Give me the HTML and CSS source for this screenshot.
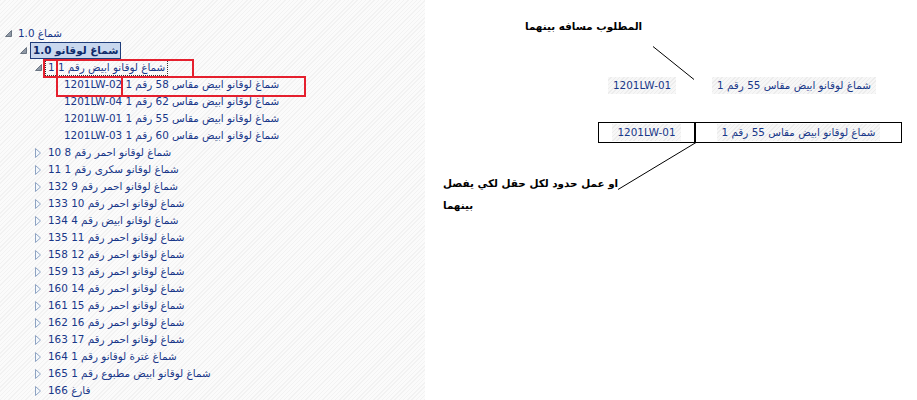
FILE: index.html
```html
<!DOCTYPE html>
<html lang="ar">
<head>
<meta charset="utf-8">
<title>tree</title>
<link rel="stylesheet" href="styles.css">
</head>
<body>
<div class="page">
  <div class="tree-panel">
    <ul class="tree" dir="ltr">
      <li class="node l0"><span class="tg"><svg width="7" height="7" viewBox="0 0 7 7"><polygon points="6.5,0.5 6.5,6.5 0.5,6.5" class="exp"/></svg></span><span class="lbl">1.0 شماغ</span></li>
      <li class="node l1"><span class="tg"><svg width="7" height="7" viewBox="0 0 7 7"><polygon points="6.5,0.5 6.5,6.5 0.5,6.5" class="exp"/></svg></span><span class="lbl sel">1.0 شماغ لوقانو</span></li>
      <li class="node l2"><span class="tg"><svg width="7" height="7" viewBox="0 0 7 7"><polygon points="6.5,0.5 6.5,6.5 0.5,6.5" class="exp"/></svg></span><span class="lbl focus">1 شماغ لوقانو ابيض رقم 1</span></li>
      <li class="node l3"><span class="tg"></span><span class="lbl">1201LW-02 شماغ لوقانو ابيض مقاس 58 رقم 1</span></li>
      <li class="node l3"><span class="tg"></span><span class="lbl">1201LW-04 شماغ لوقانو ابيض مقاس 62 رقم 1</span></li>
      <li class="node l3"><span class="tg"></span><span class="lbl">1201LW-01 شماغ لوقانو ابيض مقاس 55 رقم 1</span></li>
      <li class="node l3"><span class="tg"></span><span class="lbl">1201LW-03 شماغ لوقانو ابيض مقاس 60 رقم 1</span></li>
      <li class="node l2"><span class="tg"><svg width="7" height="10" viewBox="0 0 7 10"><polygon points="0.5,0.5 5.5,5 0.5,9.5" class="col"/></svg></span><span class="lbl">10 شماغ لوقانو احمر رقم 8</span></li>
      <li class="node l2"><span class="tg"><svg width="7" height="10" viewBox="0 0 7 10"><polygon points="0.5,0.5 5.5,5 0.5,9.5" class="col"/></svg></span><span class="lbl">11 شماغ لوقانو سكرى رقم 1</span></li>
      <li class="node l2"><span class="tg"><svg width="7" height="10" viewBox="0 0 7 10"><polygon points="0.5,0.5 5.5,5 0.5,9.5" class="col"/></svg></span><span class="lbl">132 شماغ لوقانو احمر رقم 9</span></li>
      <li class="node l2"><span class="tg"><svg width="7" height="10" viewBox="0 0 7 10"><polygon points="0.5,0.5 5.5,5 0.5,9.5" class="col"/></svg></span><span class="lbl">133 شماغ لوقانو احمر رقم 10</span></li>
      <li class="node l2"><span class="tg"><svg width="7" height="10" viewBox="0 0 7 10"><polygon points="0.5,0.5 5.5,5 0.5,9.5" class="col"/></svg></span><span class="lbl">134 شماغ لوقانو ابيض رقم 4</span></li>
      <li class="node l2"><span class="tg"><svg width="7" height="10" viewBox="0 0 7 10"><polygon points="0.5,0.5 5.5,5 0.5,9.5" class="col"/></svg></span><span class="lbl">135 شماغ لوقانو احمر رقم 11</span></li>
      <li class="node l2"><span class="tg"><svg width="7" height="10" viewBox="0 0 7 10"><polygon points="0.5,0.5 5.5,5 0.5,9.5" class="col"/></svg></span><span class="lbl">158 شماغ لوقانو احمر رقم 12</span></li>
      <li class="node l2"><span class="tg"><svg width="7" height="10" viewBox="0 0 7 10"><polygon points="0.5,0.5 5.5,5 0.5,9.5" class="col"/></svg></span><span class="lbl">159 شماغ لوقانو احمر رقم 13</span></li>
      <li class="node l2"><span class="tg"><svg width="7" height="10" viewBox="0 0 7 10"><polygon points="0.5,0.5 5.5,5 0.5,9.5" class="col"/></svg></span><span class="lbl">160 شماغ لوقانو احمر رقم 14</span></li>
      <li class="node l2"><span class="tg"><svg width="7" height="10" viewBox="0 0 7 10"><polygon points="0.5,0.5 5.5,5 0.5,9.5" class="col"/></svg></span><span class="lbl">161 شماغ لوقانو احمر رقم 15</span></li>
      <li class="node l2"><span class="tg"><svg width="7" height="10" viewBox="0 0 7 10"><polygon points="0.5,0.5 5.5,5 0.5,9.5" class="col"/></svg></span><span class="lbl">162 شماغ لوقانو احمر رقم 16</span></li>
      <li class="node l2"><span class="tg"><svg width="7" height="10" viewBox="0 0 7 10"><polygon points="0.5,0.5 5.5,5 0.5,9.5" class="col"/></svg></span><span class="lbl">163 شماغ لوقانو احمر رقم 17</span></li>
      <li class="node l2"><span class="tg"><svg width="7" height="10" viewBox="0 0 7 10"><polygon points="0.5,0.5 5.5,5 0.5,9.5" class="col"/></svg></span><span class="lbl">164 شماغ غترة لوقانو رقم 1</span></li>
      <li class="node l2"><span class="tg"><svg width="7" height="10" viewBox="0 0 7 10"><polygon points="0.5,0.5 5.5,5 0.5,9.5" class="col"/></svg></span><span class="lbl">165 شماغ لوقانو ابيض مطبوع رقم 1</span></li>
      <li class="node l2"><span class="tg"><svg width="7" height="10" viewBox="0 0 7 10"><polygon points="0.5,0.5 5.5,5 0.5,9.5" class="col"/></svg></span><span class="lbl">166 فارغ</span></li>
    </ul>
    <div class="mark mark-a"></div>
    <div class="mark mark-b"></div>
    <div class="mark mark-c"></div>
    <div class="mark mark-d"></div>
  </div>
  <div class="canvas">
    <div class="note note-top">المطلوب مسافه بينهما</div>
    <div class="tag tag-code1">1201LW-01</div>
    <div class="tag tag-name1">شماغ لوقانو ابيض مقاس 55 رقم 1</div>
    <div class="pair">
      <div class="cell cell-code"><span class="tag">1201LW-01</span></div>
      <div class="cell cell-name"><span class="tag">شماغ لوقانو ابيض مقاس 55 رقم 1</span></div>
    </div>
    <div class="note note-bottom" dir="ltr"><span>او عمل حدود لكل حقل لكي يفصل</span><span>بينهما</span></div>
    <svg class="lines" width="492" height="400" viewBox="0 0 492 400">
      <line x1="228" y1="46.5" x2="269" y2="79.5"/>
      <line x1="271" y1="142.5" x2="193" y2="189.5"/>
    </svg>
  </div>
</div>
</body>
</html>
```
FILE: styles.css
```css
html, body {
  margin: 0;
  padding: 0;
  background: #ffffff;
}
.page {
  display: flex;
  width: 917px;
  height: 400px;
  overflow: hidden;
  font-family: "DejaVu Sans", sans-serif;
}
.tree-panel {
  position: relative;
  width: 425px;
  height: 400px;
  flex: none;
  background: repeating-linear-gradient(-45deg, #f2f2f2 0px, #f2f2f2 1px, #fbfbfb 1px, #fbfbfb 3px);
}
.tree {
  list-style: none;
  margin: 0;
  padding: 25px 0 0 0;
}
.node {
  display: flex;
  align-items: center;
  height: 17px;
}
.l0 { padding-left: 2px; }
.l1 { padding-left: 17px; }
.l2 { padding-left: 32px; }
.l3 { padding-left: 48px; }
.tg {
  width: 13px;
  height: 17px;
  flex: none;
  display: flex;
  align-items: center;
  justify-content: center;
}
.tg svg { display: block; }
.exp {
  fill: #8f99a6;
  stroke: #6b7582;
  stroke-width: 1;
}
.col {
  fill: #f4f8fc;
  stroke: #8ea3c2;
  stroke-width: 1;
}
.lbl {
  font-size: 10.4px;
  line-height: 13px;
  color: #183789;
  padding: 1px 2px;
  border: 1px solid transparent;
  white-space: nowrap;
}
.sel {
  font-weight: bold;
  background: #c9d8ee;
  border-color: #1f3d7a;
  color: #0e2a6a;
}
.focus {
  border: 1px dotted #333333;
}
.mark {
  position: absolute;
  border: 2px solid #e5202e;
  box-sizing: border-box;
}
.mark-a { left: 43px; top: 59px; width: 15px; height: 19px; }
.mark-b { left: 56px; top: 59px; width: 138px; height: 19px; }
.mark-c { left: 56px; top: 76px; width: 67px; height: 21px; }
.mark-d { left: 121px; top: 76px; width: 185px; height: 21px; }
.canvas {
  position: relative;
  flex: 1;
  height: 400px;
  background: #ffffff;
}
.note {
  position: absolute;
  font-weight: bold;
  font-size: 10.4px;
  color: #000000;
  white-space: nowrap;
}
.note-top { left: 100px; top: 20px; }
.note-bottom {
  left: 18px;
  top: 172px;
  display: flex;
  flex-direction: column;
  align-items: flex-start;
  line-height: 22px;
}
.tag {
  font-size: 10.4px;
  line-height: 15px;
  color: #183789;
  padding: 1px 5px;
  white-space: nowrap;
  background: repeating-linear-gradient(-45deg, #ececec 0px, #ececec 1px, #f7f7f7 1px, #f7f7f7 3px);
}
.tag-code1 { position: absolute; left: 183px; top: 77px; }
.tag-name1 { position: absolute; left: 287px; top: 77px; }
.pair {
  position: absolute;
  left: 173px;
  top: 122px;
  display: flex;
  height: 21px;
  box-sizing: border-box;
}
.cell {
  display: flex;
  align-items: center;
  justify-content: center;
  border: 1px solid #000000;
  box-sizing: border-box;
  height: 21px;
}
.cell-code { width: 98px; border-right-width: 2px; }
.cell-name { width: 206px; border-left: none; }
.lines {
  position: absolute;
  left: 0;
  top: 0;
  pointer-events: none;
}
.lines line {
  stroke: #000000;
  stroke-width: 1;
}
```
